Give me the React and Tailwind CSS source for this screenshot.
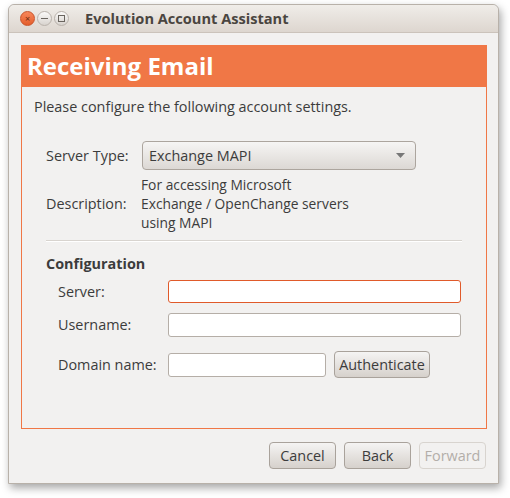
export default function App() {
	const font = { fontFamily: '"Open Sans", "DejaVu Sans", sans-serif' };
	return (
		<div className="w-[510px] h-[498px] bg-white pt-[4px] pl-[8px]" style={font}>
			<div className="w-[491px] h-[480px] bg-[#f2f1f0] rounded-t-[6px] border border-[#b8b1a9] shadow-[2px_4px_8px_rgba(0,0,0,0.35)] flex flex-col text-[#3c3c3c] text-[14.4px]">
				{/* title bar */}
				<div className="h-[28px] flex items-center rounded-t-[6px] bg-gradient-to-b from-[#f0ede9] to-[#ddd6cf] border-b border-[#cbc3bb] px-[11px]">
					<div className="w-[15px] h-[15px] rounded-full bg-gradient-to-b from-[#f7875a] to-[#e35d2a] border border-[#c9532a] flex items-center justify-center text-[9px] leading-none text-[#6b2a10]">×</div>
					<div className="ml-[2px] w-[15px] h-[15px] rounded-full bg-gradient-to-b from-[#fbfaf9] to-[#d8d3ce] border border-[#b9b2ab] flex items-center justify-center">
						<div className="w-[7px] h-[1px] bg-[#6a655f]" />
					</div>
					<div className="ml-[2px] w-[15px] h-[15px] rounded-full bg-gradient-to-b from-[#fbfaf9] to-[#d8d3ce] border border-[#b9b2ab] flex items-center justify-center">
						<div className="w-[7px] h-[7px] border border-[#6a655f]" />
					</div>
					<div className="ml-[16px] font-bold text-[14.6px] text-[#4a4540]">Evolution Account Assistant</div>
				</div>

				{/* page */}
				<div className="mt-[12px] mx-[12px] w-[466px] flex flex-col">
					<div className="h-[42px] bg-[#f07746] flex items-center px-[6px]">
						<span className="text-white font-bold text-[24px] leading-none">Receiving Email</span>
					</div>
					<div className="h-[342px] border-x border-b border-[#f07746] flex flex-col px-[12px]">
						<div className="mt-[11px] h-[18px] leading-[18px]">Please configure the following account settings.</div>

						<div className="mt-[25px] flex items-center pl-[12px]">
							<div className="w-[96px]">Server Type:</div>
							<div className="w-[274px] h-[29px] rounded-[4px] border border-[#aca59e] bg-gradient-to-b from-[#f6f5f4] to-[#dcd8d4] flex items-center justify-between px-[6px]">
								<span>Exchange MAPI</span>
								<svg width="9" height="5" viewBox="0 0 9 5" className="mr-[4px]"><path d="M0 0 H9 L4.5 5 Z" fill="#777" /></svg>
							</div>
						</div>

						<div className="mt-[5px] flex items-center pl-[12px]">
							<div className="w-[95px]">Description:</div>
							<div className="text-[13.8px] leading-[19px]">
								<div>For accessing Microsoft</div>
								<div>Exchange / OpenChange servers</div>
								<div>using MAPI</div>
							</div>
						</div>

						<div className="mt-[8px] mx-[12px] h-[2px] bg-[#d8d4cf] border-b border-white" />

						<div className="mt-[13px] pl-[12px] font-bold h-[18px] leading-[18px]">Configuration</div>

						<div className="mt-[7px] flex items-center pl-[24px]">
							<div className="w-[110px]">Server:</div>
							<div className="w-[293px] h-[23px] rounded-[3px] border border-[#e05a2a] bg-white" />
						</div>
						<div className="mt-[10px] flex items-center pl-[24px]">
							<div className="w-[110px]">Username:</div>
							<div className="w-[293px] h-[24px] rounded-[3px] border border-[#b5aea7] bg-white" />
						</div>
						<div className="mt-[14px] flex items-center pl-[24px]">
							<div className="w-[110px]">Domain name:</div>
							<div className="w-[158px] h-[24px] rounded-[3px] border border-[#b5aea7] bg-white" />
							<div className="ml-[8px] w-[96px] h-[27px] rounded-[4px] border border-[#a9a29b] bg-gradient-to-b from-[#f5f4f3] to-[#d6d1cc] flex items-center justify-center">Authenticate</div>
						</div>
					</div>
				</div>

				{/* buttons */}
				<div className="mt-[13px] flex justify-end gap-[8px] pr-[12px]">
					<div className="w-[67px] h-[27px] rounded-[4px] border border-[#a9a29b] bg-gradient-to-b from-[#f5f4f3] to-[#d6d1cc] flex items-center justify-center">Cancel</div>
					<div className="w-[67px] h-[27px] rounded-[4px] border border-[#a9a29b] bg-gradient-to-b from-[#f5f4f3] to-[#d6d1cc] flex items-center justify-center">Back</div>
					<div className="w-[67px] h-[27px] rounded-[4px] border border-[#d8d4cf] bg-[#f2f1f0] flex items-center justify-center text-[#b3aea9]">Forward</div>
				</div>
			</div>
		</div>
	);
}
